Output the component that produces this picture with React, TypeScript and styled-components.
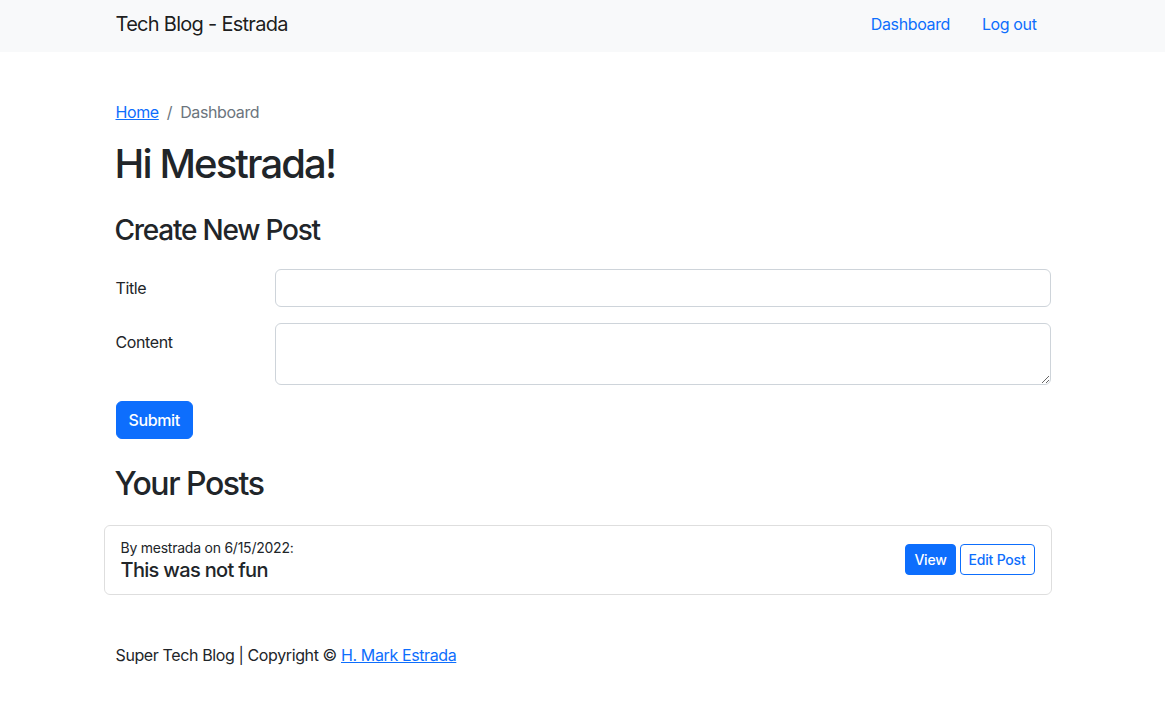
import React from "react";
import styled, { createGlobalStyle } from "styled-components";

const Global = createGlobalStyle`
  * { box-sizing: border-box; }
  body {
    margin: 0;
    font-family: Inter, "Noto Sans", "Liberation Sans", sans-serif;
    font-size: 16px;
    line-height: 1.5;
    letter-spacing: -0.024em;
    color: #212529;
    background: #fff;
  }
`;

const NavBar = styled.nav`
  background: #f8f9fa;
  height: 52px;
`;

const Container = styled.div`
  width: 960px;
  margin: 0 auto;
  padding: 0 12px;
`;

const NavInner = styled(Container)`
  height: 100%;
  display: flex;
  align-items: flex-start;
  justify-content: space-between;
`;

const Brand = styled.a`
  font-size: 20px;
  letter-spacing: -0.036em;
  color: rgba(0, 0, 0, 0.9);
  text-decoration: none;
  line-height: 30px;
  margin-top: 9px;
  padding-left: 1px;
`;

const NavLinks = styled.div`
  display: flex;
  margin-top: 4px;
  margin-right: -2px;
`;

const NavLink = styled.a`
  color: #0d6efd;
  text-decoration: none;
  padding: 8px 16px;
`;

const Main = styled(Container)`
  padding-top: 48px;
`;

const Breadcrumb = styled.ol`
  display: flex;
  list-style: none;
  margin: 0 0 16px;
  padding: 0 0 0 1px;
`;

const Crumb = styled.li<{ $active?: boolean }>`
  color: ${(p) => (p.$active ? "#6c757d" : "#212529")};
  &:not(:first-child)::before {
    content: "/";
    color: #6c757d;
    padding: 0 8px;
  }
`;

const Link = styled.a`
  color: #0d6efd;
  text-decoration: underline;
`;

const H1 = styled.h1`
  font-size: 40px;
  font-weight: 500;
  line-height: 1.2;
  letter-spacing: -0.047em;
  margin: 0 0 8px;
`;

const H3 = styled.h3`
  font-size: 28px;
  font-weight: 500;
  line-height: 1.2;
  letter-spacing: -0.044em;
  margin: 26px 0 21px;
`;

const H2 = styled.h2`
  font-size: 32px;
  font-weight: 500;
  line-height: 1.2;
  letter-spacing: -0.046em;
  margin: 26px 0 22px;
`;

const FormRow = styled.div`
  display: grid;
  grid-template-columns: 160px 1fr;
  margin: 0 -12px 16px;
`;

const Label = styled.label`
  padding: 7px 13px;
`;

const Field = styled.div`
  padding: 0 12px;
`;

const Input = styled.input`
  display: block;
  width: 100%;
  height: 38px;
  border: 1px solid #ced4da;
  border-radius: 6px;
  padding: 6px 12px;
  font: inherit;
`;

const TextArea = styled.textarea`
  display: block;
  width: 100%;
  height: 62px;
  border: 1px solid #ced4da;
  border-radius: 6px;
  padding: 6px 12px;
  font: inherit;
  resize: vertical;
`;

const Button = styled.button<{ $outline?: boolean; $small?: boolean }>`
  font-family: inherit;
  font-size: ${(p) => (p.$small ? "14px" : "16px")};
  letter-spacing: ${(p) => (p.$small ? "-0.015em" : "-0.024em")};
  font-weight: 500;
  line-height: 1.5;
  padding: ${(p) => (p.$small ? "4px 8px" : "6px 12px")};
  border-radius: ${(p) => (p.$small ? "4px" : "6px")};
  border: 1px solid #0d6efd;
  background: ${(p) => (p.$outline ? "#fff" : "#0d6efd")};
  color: ${(p) => (p.$outline ? "#0d6efd" : "#fff")};
  cursor: pointer;
  margin-left: 1px;
`;

const Card = styled.div`
  margin: 0 -1px 0 -11px;
  border: 1px solid rgba(0, 0, 0, 0.13);
  border-radius: 6px;
  padding: 11px 16px 12px 16px;
  display: flex;
  align-items: center;
  justify-content: space-between;
`;

const Meta = styled.div`
  font-size: 14px;
  letter-spacing: -0.017em;
  line-height: 21px;
`;

const PostTitle = styled.h5`
  margin: 0;
  font-size: 20px;
  font-weight: 500;
  letter-spacing: -0.034em;
  line-height: 24px;
`;

const Actions = styled.div`
  display: flex;
  gap: 3px;
`;

const Footer = styled.footer`
  margin-top: 48px;
  padding-left: 1px;
`;

export default function App() {
  return (
    <>
      <Global />
      <NavBar>
        <NavInner>
          <Brand href="#">Tech Blog - Estrada</Brand>
          <NavLinks>
            <NavLink href="#">Dashboard</NavLink>
            <NavLink href="#">Log out</NavLink>
          </NavLinks>
        </NavInner>
      </NavBar>
      <Main>
        <Breadcrumb>
          <Crumb>
            <Link href="#">Home</Link>
          </Crumb>
          <Crumb $active>Dashboard</Crumb>
        </Breadcrumb>
        <H1>Hi Mestrada!</H1>
        <H3>Create New Post</H3>
        <FormRow>
          <Label>Title</Label>
          <Field>
            <Input type="text" />
          </Field>
        </FormRow>
        <FormRow>
          <Label>Content</Label>
          <Field>
            <TextArea />
          </Field>
        </FormRow>
        <Button>Submit</Button>
        <H2>Your Posts</H2>
        <Card>
          <div>
            <Meta>By mestrada on 6/15/2022:</Meta>
            <PostTitle>This was not fun</PostTitle>
          </div>
          <Actions>
            <Button $small>View</Button>
            <Button $small $outline>Edit Post</Button>
          </Actions>
        </Card>
        <Footer>
          Super Tech Blog | Copyright © <Link href="#">H. Mark Estrada</Link>
        </Footer>
      </Main>
    </>
  );
}
